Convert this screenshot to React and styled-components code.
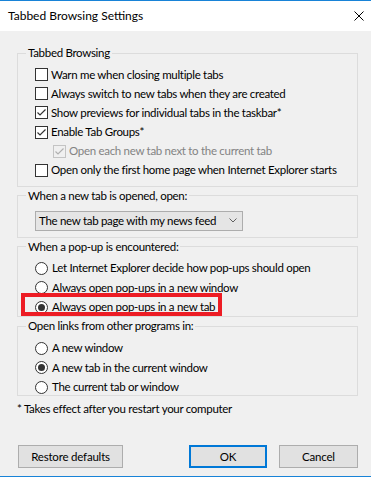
import React from "react";
import styled, { createGlobalStyle, css } from "styled-components";

const FONT = `Lato, "Liberation Sans", Arial, sans-serif`;

const GlobalStyle = createGlobalStyle`
  html, body {
    margin: 0;
    padding: 0;
    background: #f0f0f0;
  }
  body {
    font-family: ${FONT};
    font-size: 11.5px;
    letter-spacing: -0.3px;
    color: #000;
  }
`;

const Window = styled.div`
  width: 371px;
  height: 477px;
  box-sizing: border-box;
  border-top: 1px solid #1883d7;
  border-bottom: 1px solid #1883d7;
  background: #f0f0f0;
  display: flex;
  flex-direction: column;
`;

const TitleBar = styled.div`
  height: 30px;
  flex: none;
  background: #fff;
  display: flex;
  align-items: center;
  justify-content: space-between;
  padding: 0 7px 0 8px;
`;

const Title = styled.span`
  font-size: 12px;
  letter-spacing: 0;
  line-height: 14px;
`;

const Body = styled.div`
  flex: 1;
  display: flex;
  flex-direction: column;
  padding: 15px 13px 8px 17px;
`;

const Groups = styled.div`
  display: flex;
  flex-direction: column;
  gap: 2px;
`;

const Group = styled.fieldset`
  margin: 0;
  min-width: 0;
  border: 1px solid #dcdcdc;
  padding: ${({ $pad }) => $pad};
`;

const Legend = styled.legend`
  margin-left: -9px;
  padding: 0 2px;
  line-height: 14px;
`;

const Options = styled.div`
  display: flex;
  flex-direction: column;
  align-items: flex-start;
  gap: ${({ $gap }) => $gap}px;
`;

const OptionRow = styled.div`
  position: relative;
  display: flex;
  align-items: center;
  gap: ${({ $radio }) => ($radio ? 4 : 3)}px;
  height: 14px;
  line-height: 14px;
  white-space: nowrap;
  margin-left: ${({ $indent }) => ($indent ? 18 : 0)}px;
  color: ${({ $disabled }) => ($disabled ? "#838383" : "#000")};
  svg {
    flex: none;
  }
  ${({ $highlight }) =>
    $highlight &&
    css`
      &::after {
        content: "";
        position: absolute;
        left: -14px;
        top: -7px;
        width: 201px;
        height: 23px;
        box-sizing: border-box;
        border: 4px solid #ed1c24;
        pointer-events: none;
      }
    `}
`;

const Select = styled.div`
  width: 208px;
  height: 20px;
  box-sizing: border-box;
  border: 1px solid #adadad;
  background: #e5e5e5;
  display: flex;
  align-items: center;
  justify-content: space-between;
  padding: 0 5px 0 3px;
  line-height: 14px;
  white-space: nowrap;
`;

const Note = styled.div`
  margin-top: 6px;
  line-height: 14px;
`;

const ButtonRow = styled.div`
  margin-top: auto;
  margin-left: 1px;
  display: flex;
  gap: 12px;
`;

const Button = styled.button`
  height: 23px;
  width: ${({ $w }) => $w}px;
  box-sizing: border-box;
  font-family: ${FONT};
  font-size: 11.5px;
  letter-spacing: -0.2px;
  color: #000;
  background: #e1e1e1;
  border: ${({ $primary }) =>
    $primary ? "2px solid #0078d7" : "1px solid #adadad"};
  padding: 0;
  margin-left: ${({ $push }) => ($push ? "auto" : "0")};
`;

const CloseIcon = () => (
  <svg width="10" height="10" viewBox="0 0 10 10">
    <path d="M0.5 0.5 L9.5 9.5 M9.5 0.5 L0.5 9.5" stroke="#000" strokeWidth="1" />
  </svg>
);

const Chevron = () => (
  <svg width="8" height="5" viewBox="0 0 8 5">
    <polyline points="0.5,0.5 4,4 7.5,0.5" fill="none" stroke="#606060" strokeWidth="1" />
  </svg>
);

const CheckBox = ({ checked, disabled }) => (
  <svg width="13" height="13" viewBox="0 0 13 13">
    <rect
      x="0.5"
      y="0.5"
      width="12"
      height="12"
      fill={disabled ? "#f0f0f0" : "#fff"}
      stroke={disabled ? "#c4c4c4" : "#333"}
    />
    {checked && (
      <polyline
        points="2.5,6.5 5,9 10.5,3.5"
        fill="none"
        stroke={disabled ? "#b0b0b0" : "#333"}
        strokeWidth="1.2"
      />
    )}
  </svg>
);

const RadioDot = ({ checked }) => (
  <svg width="13" height="13" viewBox="0 0 13 13">
    <circle cx="6.5" cy="6.5" r="6" fill="#fff" stroke="#333" />
    {checked && <circle cx="6.5" cy="6.5" r="3.5" fill="#333" />}
  </svg>
);

const tabOptions = [
  { label: "Warn me when closing multiple tabs" },
  { label: "Always switch to new tabs when they are created" },
  { label: "Show previews for individual tabs in the taskbar*", checked: true },
  { label: "Enable Tab Groups*", checked: true },
  { label: "Open each new tab next to the current tab", checked: true, disabled: true, indent: true },
  { label: "Open only the first home page when Internet Explorer starts" },
];

const popupOptions = [
  { label: "Let Internet Explorer decide how pop-ups should open" },
  { label: "Always open pop-ups in a new window" },
  { label: "Always open pop-ups in a new tab", checked: true, highlight: true },
];

const linkOptions = [
  { label: "A new window" },
  { label: "A new tab in the current window", checked: true },
  { label: "The current tab or window" },
];

const App = () => {
  return (
    <>
      <GlobalStyle />
      <Window>
        <TitleBar>
          <Title>Tabbed Browsing Settings</Title>
          <CloseIcon />
        </TitleBar>
        <Body>
          <Groups>
            <Group $pad="7.5px 0 8.5px 17px">
              <Legend>Tabbed Browsing</Legend>
              <Options $gap={5.2}>
                {tabOptions.map((o, i) => (
                  <OptionRow key={i} $indent={o.indent} $disabled={o.disabled}>
                    <CheckBox checked={o.checked} disabled={o.disabled} />
                    {o.label}
                  </OptionRow>
                ))}
              </Options>
            </Group>
            <Group $pad="8px 0 6px 17px">
              <Legend>When a new tab is opened, open:</Legend>
              <Select>
                The new tab page with my news feed
                <Chevron />
              </Select>
            </Group>
            <Group $pad="7.5px 0 2px 17px">
              <Legend>When a pop-up is encountered:</Legend>
              <Options $gap={5.5}>
                {popupOptions.map((o, i) => (
                  <OptionRow key={i} $radio $highlight={o.highlight}>
                    <RadioDot checked={o.checked} />
                    {o.label}
                  </OptionRow>
                ))}
              </Options>
            </Group>
            <Group $pad="8px 0 0.5px 17px">
              <Legend>Open links from other programs in:</Legend>
              <Options $gap={5.5}>
                {linkOptions.map((o, i) => (
                  <OptionRow key={i} $radio>
                    <RadioDot checked={o.checked} />
                    {o.label}
                  </OptionRow>
                ))}
              </Options>
            </Group>
          </Groups>
          <Note>* Takes effect after you restart your computer</Note>
          <ButtonRow>
            <Button $w={105}>Restore defaults</Button>
            <Button $w={78} $primary $push>
              OK
            </Button>
            <Button $w={79}>Cancel</Button>
          </ButtonRow>
        </Body>
      </Window>
    </>
  );
};

export default App;
